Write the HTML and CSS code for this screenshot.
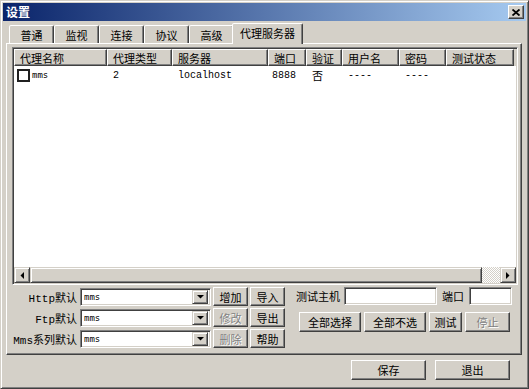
FILE: index.html
```html
<!DOCTYPE html>
<html lang="zh-CN">
<head>
    <meta charset="UTF-8">
    <meta name="viewport" content="width=device-width, initial-scale=1.0">
    <title>设置</title>
    <link rel="stylesheet" href="styles.css">
</head>
<body>
<div class="window">
    <div class="titlebar">
        <span class="title">设置</span>
        <span class="close-btn">
            <svg width="8" height="7" viewBox="0 0 8 7"><path d="M0.5 0.5L7.5 6.5M7.5 0.5L0.5 6.5" stroke="#000" stroke-width="1.8"/></svg>
        </span>
    </div>

    <div class="tabs">
        <div class="tab">普通</div>
        <div class="tab">监视</div>
        <div class="tab">连接</div>
        <div class="tab">协议</div>
        <div class="tab">高级</div>
        <div class="tab active">代理服务器</div>
    </div>

    <div class="panel">
        <!-- proxy list -->
        <div class="list">
            <div class="list-head">
                <div class="hcell c1">代理名称</div>
                <div class="hcell c2">代理类型</div>
                <div class="hcell c3">服务器</div>
                <div class="hcell c4">端口</div>
                <div class="hcell c5">验证</div>
                <div class="hcell c6">用户名</div>
                <div class="hcell c7">密码</div>
                <div class="hcell c8">测试状态</div>
            </div>
            <div class="list-body">
                <div class="row">
                    <div class="cell c1"><span class="check"></span><span class="en small">mms</span></div>
                    <div class="cell c2"><span class="en">2</span></div>
                    <div class="cell c3"><span class="en">localhost</span></div>
                    <div class="cell c4 num"><span class="en">8888</span></div>
                    <div class="cell c5">否</div>
                    <div class="cell c6"><span class="en">----</span></div>
                    <div class="cell c7"><span class="en">----</span></div>
                    <div class="cell c8"></div>
                </div>
            </div>
            <div class="hscroll">
                <div class="sb-btn"><svg width="4" height="7" viewBox="0 0 4 7"><polygon points="4,0 4,7 0.5,3.5" fill="#000"/></svg></div>
                <div class="sb-thumb"></div>
                <div class="sb-track"></div>
                <div class="sb-btn"><svg width="4" height="7" viewBox="0 0 4 7"><polygon points="0,0 0,7 3.5,3.5" fill="#000"/></svg></div>
            </div>
        </div>

        <div class="controls">
            <div class="defaults">
                <label class="lbl"><span class="en lbl-en">Http</span>默认</label>
                <div class="combo"><span class="en small">mms</span><span class="drop"><svg width="7" height="4" viewBox="0 0 7 4"><polygon points="0,0 7,0 3.5,3.5" fill="#000"/></svg></span></div>
                <button class="btn">增加</button>
                <button class="btn">导入</button>

                <label class="lbl"><span class="en lbl-en">Ftp</span>默认</label>
                <div class="combo"><span class="en small">mms</span><span class="drop"><svg width="7" height="4" viewBox="0 0 7 4"><polygon points="0,0 7,0 3.5,3.5" fill="#000"/></svg></span></div>
                <button class="btn" disabled>修改</button>
                <button class="btn">导出</button>

                <label class="lbl"><span class="en lbl-en">Mms</span>系列默认</label>
                <div class="combo"><span class="en small">mms</span><span class="drop"><svg width="7" height="4" viewBox="0 0 7 4"><polygon points="0,0 7,0 3.5,3.5" fill="#000"/></svg></span></div>
                <button class="btn" disabled>删除</button>
                <button class="btn">帮助</button>
            </div>

            <div class="tester">
                <div class="test-host">
                    <span>测试主机</span>
                    <div class="field host"></div>
                    <span>端口</span>
                    <div class="field port"></div>
                </div>
                <div class="test-buttons">
                    <button class="btn wide">全部选择</button>
                    <button class="btn wide">全部不选</button>
                    <button class="btn">测试</button>
                    <button class="btn stop" disabled>停止</button>
                </div>
            </div>
        </div>
    </div>

    <div class="footer">
        <button class="btn big">保存</button>
        <button class="btn big">退出</button>
    </div>
</div>
</body>
</html>
```

FILE: styles.css
```css
* {
    box-sizing: border-box;
}
body {
    margin: 0;
    font-family: "Noto Sans CJK SC", sans-serif;
    font-size: 11px;
    color: #000;
    background: #D4D0C8;
}
.en {
    font-family: "Liberation Mono", monospace;
    font-size: 10px;
    color: #000;
}
.en.small {
    font-family: "DejaVu Sans Mono", monospace;
    font-size: 9px;
}
.window {
    width: 529px;
    height: 389px;
    padding: 2px;
    border: 1px solid;
    border-color: #D4D0C8 #404040 #404040 #D4D0C8;
    box-shadow: inset 1px 1px #fff, inset -1px -1px #808080;
    background: #D4D0C8;
    display: flex;
    flex-direction: column;
}

/* title bar */
.titlebar {
    height: 18px;
    flex: none;
    display: flex;
    align-items: center;
    justify-content: space-between;
    padding: 0 2px 0 3px;
    background: linear-gradient(to right, #0A246A, #A6CAF0);
}
.title {
    color: #fff;
    font-weight: bold;
    font-size: 12px;
    line-height: 1;
}
.close-btn {
    width: 16px;
    height: 14px;
    display: flex;
    align-items: center;
    justify-content: center;
    background: #D4D0C8;
    border: 1px solid;
    border-color: #fff #404040 #404040 #fff;
    box-shadow: inset -1px -1px #808080;
}

/* tabs */
.tabs {
    height: 22px;
    flex: none;
    display: flex;
    align-items: flex-end;
    padding-left: 6px;
}
.tab {
    height: 18px;
    min-width: 45px;
    padding: 0 7px;
    display: flex;
    align-items: center;
    justify-content: center;
    border: 1px solid;
    border-bottom: none;
    border-color: #fff #404040 transparent #fff;
    border-radius: 2px 2px 0 0;
    box-shadow: inset -1px 0 #808080;
    background: #D4D0C8;
}
.tab.active {
    height: 21px;
    margin: 0 -2px -1px;
    padding: 0 7px 2px;
    position: relative;
    z-index: 1;
}

/* panel */
.panel {
    height: 312px;
    flex: none;
    margin: 0 4px 0 3px;
    padding: 3px 3px 0 5px;
    border: 1px solid;
    border-color: #fff #404040 #404040 #fff;
    box-shadow: inset -1px -1px #808080;
}
.list {
    height: 238px;
    display: flex;
    flex-direction: column;
    padding: 1px;
    border: 1px solid;
    border-color: #808080 #fff #fff #808080;
    box-shadow: inset 1px 1px #404040, inset -1px -1px #D4D0C8;
    background: #fff;
}
.list-head {
    height: 17px;
    flex: none;
    display: flex;
    background: #D4D0C8;
}
.hcell {
    height: 17px;
    padding-left: 5px;
    display: flex;
    align-items: center;
    white-space: nowrap;
    border: 1px solid;
    border-color: #fff #404040 #404040 #fff;
    box-shadow: inset -1px -1px #808080;
}
.c1 { width: 93px; }
.c2 { width: 65px; }
.c3 { width: 96px; }
.c4 { width: 38px; }
.c5 { width: 36px; }
.c6 { width: 57px; }
.c7 { width: 47px; }
.c8 { width: 68px; }
.list-body {
    flex: 1;
}
.row {
    height: 16px;
    display: flex;
    margin-top: 1px;
}
.cell {
    padding-left: 6px;
    display: flex;
    align-items: center;
    white-space: nowrap;
}
.cell.c1 {
    padding-left: 3px;
}
.cell.num {
    padding-left: 4px;
}
.check {
    width: 13px;
    height: 13px;
    border: 2px solid #202020;
    background: #fff;
    margin-right: 2px;
}

/* horizontal scroll bar */
.hscroll {
    height: 16px;
    flex: none;
    display: flex;
}
.sb-btn {
    width: 16px;
    height: 16px;
    display: flex;
    align-items: center;
    justify-content: center;
    background: #D4D0C8;
    border: 1px solid;
    border-color: #D4D0C8 #404040 #404040 #D4D0C8;
    box-shadow: inset 1px 1px #fff, inset -1px -1px #808080;
}
.sb-thumb {
    width: 452px;
    background: #D4D0C8;
    border: 1px solid;
    border-color: #D4D0C8 #404040 #404040 #D4D0C8;
    box-shadow: inset 1px 1px #fff, inset -1px -1px #808080;
}
.sb-track {
    flex: 1;
    background-color: #fff;
    background-image: conic-gradient(#D4D0C8 25%, #fff 0 50%, #D4D0C8 0 75%, #fff 0);
    background-size: 2px 2px;
}

/* bottom controls */
.controls {
    display: flex;
    margin-top: 2px;
}
.defaults {
    display: grid;
    grid-template-columns: 66px 131px 35px 35px;
    grid-auto-rows: 19px;
    column-gap: 2px;
    row-gap: 2px;
    align-items: center;
}
.lbl {
    text-align: right;
    white-space: nowrap;
    margin-right: 1px;
}
.lbl-en {
    font-size: 11px;
}
.combo {
    height: 18px;
    display: flex;
    align-items: center;
    justify-content: space-between;
    padding: 2px 2px 2px 3px;
    border: 1px solid;
    border-color: #808080 #fff #fff #808080;
    box-shadow: inset 1px 1px #404040, inset -1px -1px #D4D0C8;
    background: #fff;
}
.drop {
    width: 16px;
    height: 14px;
    display: flex;
    align-items: center;
    justify-content: center;
    background: #D4D0C8;
    border: 1px solid;
    border-color: #D4D0C8 #404040 #404040 #D4D0C8;
    box-shadow: inset 1px 1px #fff, inset -1px -1px #808080;
}
.btn {
    height: 19px;
    padding: 0;
    font-family: inherit;
    font-size: 11px;
    color: #000;
    background: #D4D0C8;
    border: 1px solid;
    border-color: #fff #404040 #404040 #fff;
    box-shadow: inset -1px -1px #808080;
    border-radius: 0;
}
.btn:disabled {
    color: #808080;
    text-shadow: 1px 1px #fff;
}
.tester {
    margin-left: 11px;
    display: flex;
    flex-direction: column;
}
.test-host {
    height: 18px;
    display: flex;
    align-items: center;
    gap: 4px;
}
.field {
    height: 18px;
    border: 1px solid;
    border-color: #808080 #fff #fff #808080;
    box-shadow: inset 1px 1px #404040, inset -1px -1px #D4D0C8;
    background: #fff;
}
.host {
    width: 93px;
    margin-right: 1px;
}
.port {
    width: 43px;
    margin-left: 1px;
}
.test-buttons {
    display: flex;
    gap: 3px;
    margin-top: 7px;
    padding-left: 3px;
}
.test-buttons .btn {
    width: 33px;
    height: 20px;
}
.test-buttons .btn.wide {
    width: 62px;
}
.test-buttons .btn.stop {
    width: 45px;
}

/* footer */
.footer {
    flex: 1;
    display: flex;
    justify-content: flex-end;
    gap: 9px;
    padding: 5px 16px 0 0;
}
.btn.big {
    width: 75px;
    height: 20px;
}
```
